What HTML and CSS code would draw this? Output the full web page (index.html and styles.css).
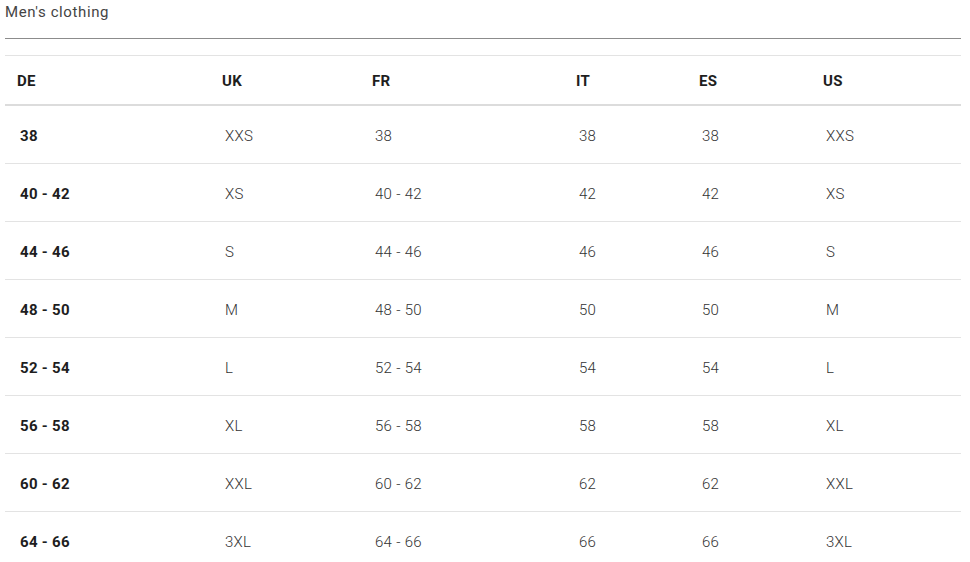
FILE: index.html
```html
<!DOCTYPE html>
<html>
<head>
<meta charset="utf-8">
<link rel="stylesheet" href="styles.css">
</head>
<body>
<div class="wrap">
  <h2 class="title">Men's clothing</h2>
  <div class="rule"></div>
  <table class="sizes">
    <colgroup>
      <col class="c1"><col class="c2"><col class="c3"><col class="c4"><col class="c5"><col class="c6">
    </colgroup>
    <thead>
      <tr><th>DE</th><th>UK</th><th>FR</th><th>IT</th><th>ES</th><th>US</th></tr>
    </thead>
    <tbody>
      <tr><td class="b">38</td><td>XXS</td><td>38</td><td>38</td><td>38</td><td>XXS</td></tr>
      <tr><td class="b">40 - 42</td><td>XS</td><td>40 - 42</td><td>42</td><td>42</td><td>XS</td></tr>
      <tr><td class="b">44 - 46</td><td>S</td><td>44 - 46</td><td>46</td><td>46</td><td>S</td></tr>
      <tr><td class="b">48 - 50</td><td>M</td><td>48 - 50</td><td>50</td><td>50</td><td>M</td></tr>
      <tr><td class="b">52 - 54</td><td>L</td><td>52 - 54</td><td>54</td><td>54</td><td>L</td></tr>
      <tr><td class="b">56 - 58</td><td>XL</td><td>56 - 58</td><td>58</td><td>58</td><td>XL</td></tr>
      <tr><td class="b">60 - 62</td><td>XXL</td><td>60 - 62</td><td>62</td><td>62</td><td>XXL</td></tr>
      <tr><td class="b">64 - 66</td><td>3XL</td><td>64 - 66</td><td>66</td><td>66</td><td>3XL</td></tr>
    </tbody>
  </table>
</div>
</body>
</html>
```
FILE: styles.css
```css
html, body {
  margin: 0;
  padding: 0;
  background: #fff;
}
body {
  font-family: Roboto, "Liberation Sans", sans-serif;
  color: #333;
}
.wrap {
  padding: 0 9px 0 5px;
}
.title {
  margin: 0 0 14px 0;
  font-size: 15px;
  line-height: 24px;
  font-weight: 400;
  letter-spacing: 0.6px;
  color: #444;
}
.rule {
  border-top: 1px solid #8c8c8c;
  margin-bottom: 16px;
}
.sizes {
  width: 956px;
  table-layout: fixed;
  border-collapse: separate;
  border-spacing: 0;
}
.c1 { width: 205px; }
.c2 { width: 150px; }
.c3 { width: 204px; }
.c4 { width: 123px; }
.c5 { width: 124px; }
.c6 { width: 150px; }
.sizes th {
  text-align: left;
  font-size: 15px;
  font-weight: 700;
  color: #1e1e1e;
  height: 48px;
  padding: 2px 0 0 12px;
  box-sizing: border-box;
  border-top: 1px solid #e3e3e3;
  border-bottom: 2px solid #dcdcdc;
  vertical-align: middle;
  letter-spacing: 0.3px;
}
.sizes th {
  height: 51px;
}
.sizes td {
  font-size: 15px;
  height: 58px;
  box-sizing: border-box;
  padding: 2px 0 0 15px;
  border-bottom: 1px solid #e3e3e3;
  vertical-align: middle;
  color: #333;
  font-weight: 300;
  letter-spacing: 0.3px;
}
.sizes td.b {
  font-weight: 700;
  color: #1e1e1e;
}
```
